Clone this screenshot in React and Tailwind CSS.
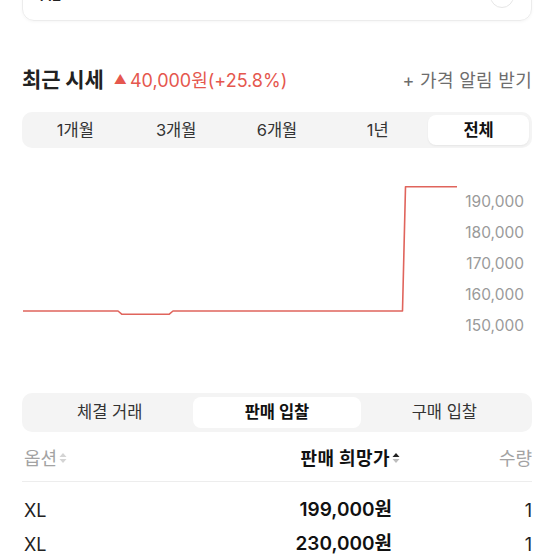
import React from "react";

const FONT = "font-['Inter','Noto_Sans_CJK_KR',sans-serif]";

function SortIcon({ active }) {
  return (
    <svg width="8" height="12" viewBox="0 0 8 12" className="ml-[2px]">
      <path d="M4 1 L7.5 5 H0.5 Z" fill={active ? "#222" : "#d4d4d4"} />
      <path d="M4 11 L7.5 7 H0.5 Z" fill={active ? "#bdbdbd" : "#d4d4d4"} />
    </svg>
  );
}

const periods = ["1개월", "3개월", "6개월", "1년", "전체"];
const axis = ["190,000", "180,000", "170,000", "160,000", "150,000"];
const bidTabs = ["체결 거래", "판매 입찰", "구매 입찰"];
const rows = [
  { size: "XL", price: "199,000원", qty: "1" },
  { size: "XL", price: "230,000원", qty: "1" },
];

export default function App() {
  return (
    <div className={`w-[554px] h-[554px] overflow-hidden bg-white text-[#222] ${FONT}`}>
      {/* size selector, scrolled mostly out of view */}
      <div className="px-[22px] -mt-[30px]">
        <div className="h-[51px] rounded-[12px] border border-[#ececec] shadow-[0_1px_3px_rgba(0,0,0,0.04)] flex items-center justify-between pl-[17px] pr-[17px]">
          <span className="text-[17px]">XL</span>
          <div className="w-[24px] h-[24px] rounded-full border border-[#e6e6e6]" />
        </div>
      </div>

      {/* recent price header */}
      <div className="mt-[45px] px-[22px] h-[28px] flex items-center justify-between">
        <div className="flex items-center">
          <span className="text-[21px] font-bold tracking-[-0.1px]">최근 시세</span>
          <span className="ml-[10px] text-[13px] text-[#e5574e]">▲</span>
          <span className="ml-[3px] text-[18px] text-[#e5574e]">40,000원(+25.8%)</span>
        </div>
        <span className="text-[18px] tracking-[0.3px] text-[#6d6d6d]">+ 가격 알림 받기</span>
      </div>

      {/* period tabs */}
      <div className="mt-[18px] mx-[22px] h-[36px] rounded-[10px] bg-[#f4f4f4] grid grid-cols-5 p-[3px]">
        {periods.map((p) => (
          <div
            key={p}
            className={
              p === "전체"
                ? "flex items-center justify-center rounded-[8px] bg-white shadow-[0_1px_2px_rgba(0,0,0,0.06)] text-[16.5px] font-bold text-[#111]"
                : "flex items-center justify-center text-[16.5px] text-[#333]"
            }
          >
            {p}
          </div>
        ))}
      </div>

      {/* price chart */}
      <div className="mt-[22px] h-[170px] pl-[22px] flex">
        <svg width="440" height="170" viewBox="0 0 440 170" className="shrink-0">
          <path
            d="M1 141 H96 L100 144.3 H147 L151 141 H380.5 L383.5 16.7 H435"
            fill="none"
            stroke="#e0645c"
            strokeWidth="1.6"
            strokeLinejoin="round"
          />
        </svg>
        <div className="w-[62px] pt-[16px] flex flex-col items-end">
          {axis.map((a) => (
            <div key={a} className="h-[31px] leading-[31px] text-[15.5px] text-[#9a9a9a]">
              {a}
            </div>
          ))}
        </div>
      </div>

      {/* bid tabs */}
      <div className="mt-[53px] mx-[22px] h-[39px] rounded-[10px] bg-[#f4f4f4] grid grid-cols-3 p-[4px]">
        {bidTabs.map((t) => (
          <div
            key={t}
            className={
              t === "판매 입찰"
                ? "flex items-center justify-center rounded-[8px] bg-white text-[16.5px] font-bold text-[#111]"
                : "flex items-center justify-center text-[16.5px] text-[#333]"
            }
          >
            {t}
          </div>
        ))}
      </div>

      {/* bid list */}
      <div className="mx-[22px] mt-[3px]">
        <div className="h-[47px] flex items-center border-b border-[#ededed] text-[18px]">
          <div className="flex items-center text-[#a3a3a3] w-[200px] pl-[2px]">
            옵션
            <SortIcon />
          </div>
          <div className="flex-1 flex items-center justify-end font-bold text-[#111] tracking-[0.4px]">
            판매 희망가
            <SortIcon active />
          </div>
          <div className="w-[132px] text-right text-[#a3a3a3]">수량</div>
        </div>
        <div className="pt-[11px]">
          {rows.map((r, i) => (
            <div key={i} className="h-[34px] flex items-center">
              <div className="w-[200px] pl-[2px] text-[18px]">{r.size}</div>
              <div className="flex-1 text-right pr-[8px] text-[19px] font-semibold text-[#111]">{r.price}</div>
              <div className="w-[132px] text-right text-[18px]">{r.qty}</div>
            </div>
          ))}
        </div>
      </div>
    </div>
  );
}
